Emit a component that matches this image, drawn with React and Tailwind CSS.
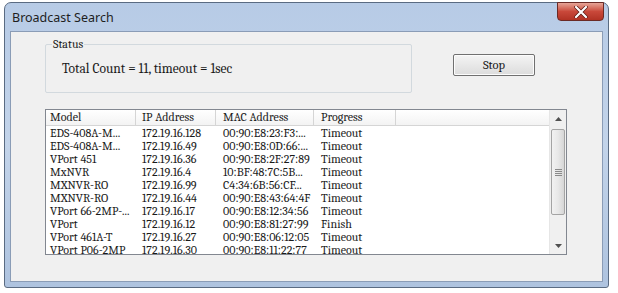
import React from 'react';

const ROWS = [
    ['EDS-408A-M...', '172.19.16.128', '00:90:E8:23:F3:...', 'Timeout'],
    ['EDS-408A-M...', '172.19.16.49', '00:90:E8:0D:66:...', 'Timeout'],
    ['VPort 451', '172.19.16.36', '00:90:E8:2F:27:89', 'Timeout'],
    ['MxNVR', '172.19.16.4', '10:BF:48:7C:5B...', 'Timeout'],
    ['MXNVR-RO', '172.19.16.99', 'C4:34:6B:56:CF...', 'Timeout'],
    ['MXNVR-RO', '172.19.16.44', '00:90:E8:43:64:4F', 'Timeout'],
    ['VPort 66-2MP-...', '172.19.16.17', '00:90:E8:12:34:56', 'Timeout'],
    ['VPort', '172.19.16.12', '00:90:E8:81:27:99', 'Finish'],
    ['VPort 461A-T', '172.19.16.27', '00:90:E8:06:12:05', 'Timeout'],
    ['VPort P06-2MP', '172.19.16.30', '00:90:E8:11:22:77', 'Timeout'],
    ['VPort 364A', '172.19.16.31', '00:90:E8:14:52:10', 'Timeout'],
];

const COLS = [
    { name: 'Model', w: 'w-[90px]', pad: 'pl-[4px]' },
    { name: 'IP Address', w: 'w-[80px]', pad: 'pl-[6px]' },
    { name: 'MAC Address', w: 'w-[98px]', pad: 'pl-[7px]' },
    { name: 'Progress', w: 'w-[82px]', pad: 'pl-[7px]' },
];

function Scrollbar() {
    return (
        <div className="w-[17px] h-full flex flex-col bg-[#f0f0f0] border-l border-[#e6e6e6]">
            <div className="h-[17px] flex items-center justify-center">
                <svg width="7" height="4" viewBox="0 0 7 4"><path d="M0 4 L3.5 0 L7 4 Z" fill="#505050" /></svg>
            </div>
            <div className="mx-[1px] mt-[2px] h-[86px] rounded-[2px] border border-[#a4a4a4] bg-gradient-to-r from-[#f2f2f2] via-[#e8e8e8] to-[#d6d6d6] flex items-center justify-center">
                <div className="flex flex-col gap-[1px]">
                    <div className="w-[7px] h-[1px] bg-[#8a8a8a]" />
                    <div className="w-[7px] h-[1px] bg-[#8a8a8a]" />
                    <div className="w-[7px] h-[1px] bg-[#8a8a8a]" />
                    <div className="w-[7px] h-[1px] bg-[#8a8a8a]" />
                </div>
            </div>
            <div className="flex-1" />
            <div className="h-[17px] flex items-center justify-center">
                <svg width="7" height="4" viewBox="0 0 7 4"><path d="M0 0 L7 0 L3.5 4 Z" fill="#505050" /></svg>
            </div>
        </div>
    );
}

function App() {
    return (
        <div className="w-[618px] h-[293px] bg-white overflow-hidden">
            <div className="ml-[4px] mt-[2px] w-[605px] h-[286px] rounded-t-[7px] rounded-b-[3px] border border-[#5a6b82] bg-gradient-to-b from-[#b7cbe6] via-[#c3d4ea] to-[#aec3df] flex flex-col">
                {/* title bar */}
                <div className="h-[28px] flex items-start justify-between pl-[7px] pr-[4px]">
                    <span className="mt-[6px] text-[12.5px] text-[#1e1e1e] font-sans">Broadcast Search</span>
                    <div className="w-[47px] h-[19px] -mt-[1px] rounded-b-[4px] border border-[#6b2a25] bg-gradient-to-b from-[#e5a497] via-[#c9483a] to-[#b13224] flex items-center justify-center">
                        <svg width="14" height="12" viewBox="0 0 14 12">
                            <path d="M2 1 L12 11 M12 1 L2 11" stroke="#5a1a14" strokeWidth="3.6" strokeLinecap="round" />
                            <path d="M2 1 L12 11 M12 1 L2 11" stroke="#ffffff" strokeWidth="2.2" strokeLinecap="round" />
                        </svg>
                    </div>
                </div>

                {/* client area */}
                <div className="mx-[5px] mb-[5px] flex-1 bg-[#f0f0f0] border border-[#8a9cb6] font-serif text-[12px] text-[#1a1a1a]">
                    <div className="flex items-start mt-[12px] ml-[34px]">
                        <div className="relative w-[367px] h-[49px] border border-[#d2d9de] rounded-[2px]">
                            <span className="absolute -top-[8px] left-[6px] px-[1px] bg-[#f0f0f0] leading-[14px]">Status</span>
                            <div className="mt-[17px] ml-[16px] text-[13.5px] leading-[14px]">Total Count = 11, timeout = 1sec</div>
                        </div>
                        <button className="ml-[41px] mt-[10px] w-[82px] h-[22px] border border-[#707070] rounded-[2px] bg-gradient-to-b from-[#f4f4f4] to-[#dcdcdc] shadow-[inset_0_0_0_1px_#fcfcfc] text-[12.5px] leading-[14px]">
                            Stop
                        </button>
                    </div>

                    {/* list view */}
                    <div className="mt-[16px] ml-[34px] w-[522px] h-[146px] border border-[#828790] bg-white flex">
                        <div className="flex-1 flex flex-col overflow-hidden">
                            <div className="h-[16px] flex border-b border-[#d5d5d5] bg-gradient-to-b from-[#ffffff] to-[#f3f3f3] shrink-0">
                                {COLS.map((c) => (
                                    <div key={c.name} className={`${c.w} ${c.pad} shrink-0 border-r border-[#d5d5d5] leading-[15px] whitespace-nowrap overflow-hidden`}>
                                        {c.name}
                                    </div>
                                ))}
                                <div className="flex-1" />
                            </div>
                            <div className="pt-[1px]">
                                {ROWS.map((r, i) => (
                                    <div key={i} className="h-[13px] flex leading-[13px]">
                                        {r.map((cell, j) => (
                                            <div key={j} className={`${COLS[j].w} ${COLS[j].pad} shrink-0 whitespace-nowrap overflow-hidden`}>
                                                {cell}
                                            </div>
                                        ))}
                                    </div>
                                ))}
                            </div>
                        </div>
                        <Scrollbar />
                    </div>
                </div>
            </div>
        </div>
    );
}

export default App;
